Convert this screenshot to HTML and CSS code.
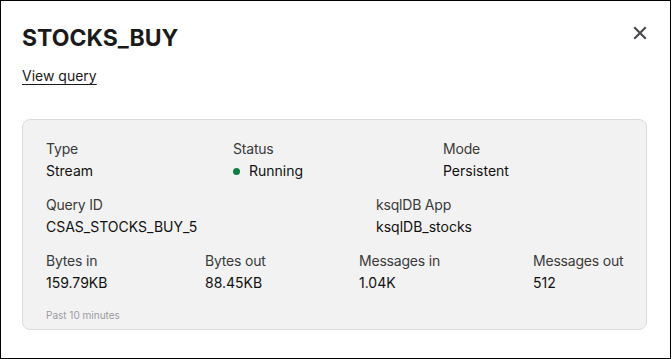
FILE: index.html
```html
<!DOCTYPE html>
<html>
<head>
    <title>STOCKS_BUY</title>
    <link rel="stylesheet" href="styles.css">
</head>
<body>
    <div class="modal">
        <div class="modal-header">
            <h1>STOCKS_BUY</h1>
            <button class="close" aria-label="Close">
                <svg width="14" height="14" viewBox="0 0 14 14">
                    <path d="M2 2L12 12M12 2L2 12" stroke="#4a4a55" stroke-width="2.2" stroke-linecap="square"/>
                </svg>
            </button>
        </div>
        <a class="view-query" href="#">View query</a>

        <div class="details">
            <div class="row row-first">
                <div class="field">
                    <div class="label">Type</div>
                    <div class="value">Stream</div>
                </div>
                <div class="field">
                    <div class="label">Status</div>
                    <div class="value"><span class="dot"></span>Running</div>
                </div>
                <div class="field">
                    <div class="label">Mode</div>
                    <div class="value">Persistent</div>
                </div>
            </div>
            <div class="row row-second">
                <div class="field">
                    <div class="label">Query ID</div>
                    <div class="value">CSAS_STOCKS_BUY_5</div>
                </div>
                <div class="field">
                    <div class="label">ksqlDB App</div>
                    <div class="value">ksqlDB_stocks</div>
                </div>
            </div>
            <div class="row row-metrics">
                <div class="field">
                    <div class="label">Bytes in</div>
                    <div class="value">159.79KB</div>
                </div>
                <div class="field">
                    <div class="label">Bytes out</div>
                    <div class="value">88.45KB</div>
                </div>
                <div class="field">
                    <div class="label">Messages in</div>
                    <div class="value">1.04K</div>
                </div>
                <div class="field">
                    <div class="label">Messages out</div>
                    <div class="value">512</div>
                </div>
            </div>
            <div class="footnote">Past 10 minutes</div>
        </div>
    </div>
</body>
</html>
```

FILE: styles.css
```css
body {
    margin: 0;
    font-family: 'Inter', 'Noto Sans', sans-serif;
    color: #1f1f1f;
    background-color: #ffffff;
}

.modal {
    box-sizing: border-box;
    width: 671px;
    height: 359px;
    border: 1px solid #000000;
    padding: 21px 23px 0 21px;
}

.modal-header {
    display: flex;
    justify-content: space-between;
    align-items: flex-start;
}

h1 {
    margin: 0;
    font-size: 23px;
    line-height: 32px;
    font-weight: 700;
    color: #1a1a1a;
}

.close {
    border: none;
    background: none;
    padding: 0;
    margin-top: 4px;
    width: 14px;
    height: 14px;
    cursor: pointer;
}

.view-query {
    display: inline-block;
    margin-top: 12px;
    font-size: 14px;
    line-height: 20px;
    color: #1a1a1a;
    text-decoration: underline;
    text-underline-offset: 3px;
}

.details {
    margin-top: 33px;
    background-color: #f2f2f2;
    border: 1px solid #dcdcde;
    border-radius: 8px;
    padding: 19px 24px 7px 23px;
}

.row {
    display: grid;
    margin-bottom: 14px;
}

.row-first {
    grid-template-columns: 187px 210px auto;
}

.row-second {
    grid-template-columns: 330px auto;
}

.row-metrics {
    grid-template-columns: 159px 154px 174px auto;
    margin-bottom: 15px;
}

.label {
    font-size: 14px;
    line-height: 20px;
    color: #3a3a3a;
    white-space: nowrap;
    letter-spacing: -0.2px;
}

.value {
    margin-top: 2px;
    font-size: 14px;
    line-height: 20px;
    font-weight: 400;
    color: #111111;
    display: flex;
    align-items: center;
    white-space: nowrap;
}

.dot {
    width: 7px;
    height: 7px;
    border-radius: 50%;
    background-color: #0b8043;
    margin-right: 9px;
}

.footnote {
    font-size: 10px;
    line-height: 14px;
    color: #9a9aa3;
}
```
